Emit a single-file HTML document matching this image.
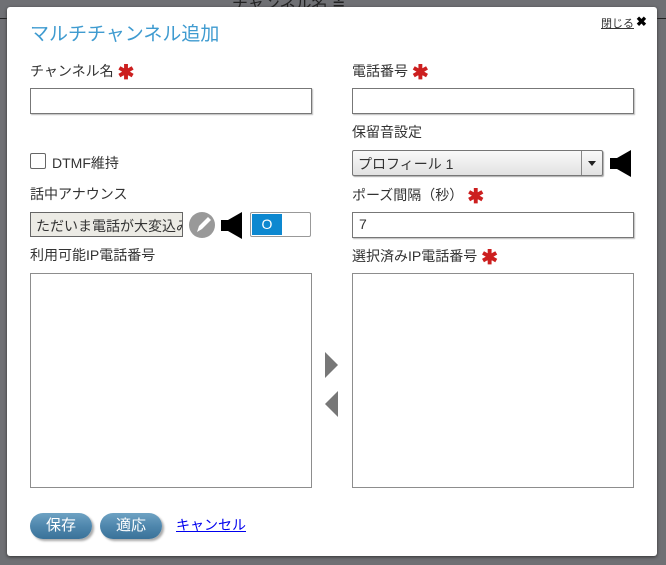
<!DOCTYPE html>
<html><head><meta charset="utf-8"><style>
body{margin:0;width:666px;height:565px;background:#6f7074;position:relative;overflow:hidden;font-family:"Liberation Sans","Noto Sans CJK JP",sans-serif;font-size:14px;color:#333}
.a{position:absolute}
.dlg{left:7px;top:7px;width:650px;height:549px;background:#fff;border-radius:3px;box-shadow:0 1px 3px #333}
.in{position:absolute;height:24px;border:1px solid #777;background:#fff;box-shadow:1px 1px 1px #bbb;box-sizing:border-box}
.lbl{position:absolute;font-size:14px;color:#333}
.st{color:#cc1f1f;font-size:20px;font-weight:bold;margin-left:4px;vertical-align:-3px}
.box{position:absolute;border:1px solid #8d8d8d;background:#fff;box-sizing:border-box}
.btn{position:absolute;height:26px;border-radius:13px;background:linear-gradient(#6ea2c3,#4f87ad 50%,#3a7299);color:#fff;font-size:15px;text-align:center;line-height:26px;box-shadow:2px 2px 2px #aaa}
</style></head><body>
<div class="a" style="left:232px;top:-10px;color:#222;font-size:16px">チャンネル名 ≑</div>
<div class="a" style="left:0;top:18px;width:666px;height:1px;background:#222"></div>
<div class="a dlg"></div>
<div class="a" style="left:30px;top:19px;font-size:19px;color:#3f9bd0">マルチチャンネル追加</div>
<div class="a" style="left:601px;top:15px;font-size:11px;color:#333;text-decoration:underline">閉じる</div>
<div class="a" style="left:636px;top:14px;font-size:13px;font-weight:bold;color:#000">✖</div>

<div class="lbl" style="left:30px;top:60px">チャンネル名<span class="st">✱</span></div>
<div class="lbl" style="left:352px;top:60px">電話番号<span class="st">✱</span></div>
<div class="in" style="left:30px;top:88px;width:282px;height:26px"></div>
<div class="in" style="left:352px;top:88px;width:282px;height:26px"></div>

<div class="lbl" style="left:352px;top:122px">保留音設定</div>
<div class="a" style="left:30px;top:153px;width:16px;height:16px;border:1px solid #666;border-radius:2px;box-sizing:border-box"></div>
<div class="lbl" style="left:52px;top:153px">DTMF維持</div>
<div class="a" style="left:352px;top:150px;width:251px;height:26px;border:1px solid #777;border-radius:2px;box-sizing:border-box;background:linear-gradient(#fafafa,#e2e2e2);box-shadow:1px 1px 1px #aaa"><span style="position:absolute;left:5px;top:3px">プロフィール 1</span><div style="position:absolute;right:0;top:0;width:20px;height:24px;border-left:1px solid #888"><div style="position:absolute;left:6px;top:10px;border:4px solid transparent;border-top:5px solid #222;border-bottom:0"></div></div></div>
<svg class="a" style="left:610px;top:150px" width="22" height="27"><rect x="0" y="8" width="8" height="11" fill="#000"/><polygon points="7,8 21,0 21,27 7,19" fill="#000"/></svg>

<div class="lbl" style="left:30px;top:184px">話中アナウンス</div>
<div class="lbl" style="left:352px;top:184px">ポーズ間隔（秒）<span class="st">✱</span></div>
<div class="a" style="left:30px;top:212px;width:153px;height:25px;border:1px solid #666;background:#ecebe5;box-sizing:border-box;overflow:hidden;white-space:nowrap;padding:3px 0 0 5px;font-size:14px">ただいま電話が大変込み</div>
<svg class="a" style="left:189px;top:211px" width="28" height="28"><circle cx="13" cy="14" r="13" fill="#999"/><path d="M8 21 L10 15 L19 6 L22 9 L13 18 Z" fill="#fff"/></svg>
<svg class="a" style="left:221px;top:212px" width="22" height="27"><rect x="0" y="8" width="8" height="11" fill="#000"/><polygon points="7,8 21,0 21,27 7,19" fill="#000"/></svg>
<div class="a" style="left:250px;top:212px;width:61px;height:25px;border:1px solid #999;box-sizing:border-box;border-radius:2px;background:#fff"><div style="position:absolute;left:1px;top:1px;width:30px;height:21px;background:#0d88d0;color:#fff;text-align:center;line-height:21px;font-size:14px">O</div></div>
<div class="in" style="left:352px;top:212px;width:282px;height:26px;padding:3px 0 0 6px">7</div>

<div class="lbl" style="left:30px;top:245px">利用可能IP電話番号</div>
<div class="lbl" style="left:352px;top:245px">選択済みIP電話番号<span class="st">✱</span></div>
<div class="box" style="left:30px;top:273px;width:282px;height:215px"></div>
<div class="box" style="left:352px;top:273px;width:282px;height:215px"></div>
<svg class="a" style="left:325px;top:352px" width="14" height="66"><polygon points="0,0 13,13 0,26" fill="#777"/><polygon points="13,39 0,52 13,65" fill="#777"/></svg>

<div class="btn" style="left:30px;top:513px;width:62px">保存</div>
<div class="btn" style="left:100px;top:513px;width:62px">適応</div>
<div class="a" style="left:176px;top:515px;color:#0000ee;text-decoration:underline;font-size:14px">キャンセル</div>
</body></html>
